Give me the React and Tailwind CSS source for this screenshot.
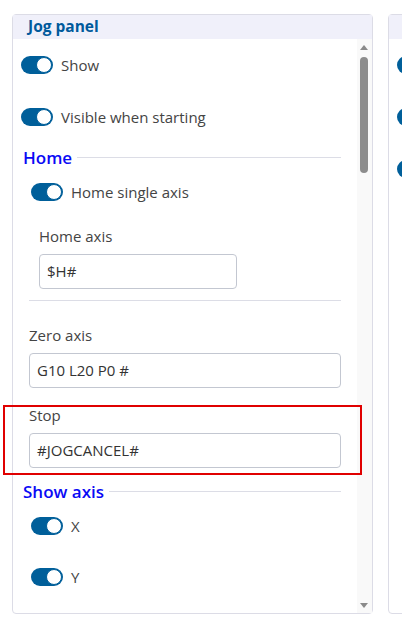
import React from "react";

function Toggle() {
  return (
    <div className="flex h-[18px] w-8 shrink-0 items-center justify-end rounded-full bg-[#005f9a] pr-[1px]">
      <div className="h-4 w-4 rounded-full border border-[#005f9a] bg-white" />
    </div>
  );
}

function ToggleRow({ label, className }) {
  return (
    <div className={"flex h-[18px] items-center gap-2 " + className}>
      <Toggle />
      <span className="text-[15px] leading-none text-[#444]">{label}</span>
    </div>
  );
}

function Legend({ text, className }) {
  return (
    <div className={"flex h-[22px] items-center gap-[5px] " + className}>
      <span className="text-[17px] font-semibold leading-none text-[#0a0af5]">{text}</span>
      <div className="h-px flex-1 bg-[#dcdde6]" />
    </div>
  );
}

function Field({ label, value, className, inputClass }) {
  return (
    <div className={className}>
      <div className="flex h-5 items-center text-[15px] text-[#444]">{label}</div>
      <div
        className={
          "mt-2 flex h-[35px] items-center rounded-[4px] border border-[#c3c7d1] px-[7px] text-[15px] text-[#333] " +
          (inputClass || "")
        }
      >
        {value}
      </div>
    </div>
  );
}

export default function App() {
  return (
    <div
      className="relative flex h-[628px] w-[402px] gap-[15px] overflow-hidden bg-white pl-3 pt-[14px]"
      style={{ fontFamily: '"Open Sans", "Noto Sans", sans-serif' }}
    >
      <div className="flex h-[600px] w-[361px] shrink-0 flex-col rounded-[4px] border border-[#dcdce6]">
        <div className="flex h-[24px] items-center bg-[#f0f0fa] pl-[15px] text-[15.5px] font-bold text-[#005a9c]">
          Jog panel
        </div>
        <div className="flex min-h-0 flex-1">
          <div className="flex-1 overflow-hidden pl-2 pr-4">
            <ToggleRow label="Show" className="mt-[17px]" />
            <ToggleRow label="Visible when starting" className="mt-[34px]" />

            <div className="pl-[2px]">
              <Legend text="Home" className="mt-[20px]" />
              <div className="pl-[6px]">
                <ToggleRow label="Home single axis" className="mt-[15px] pl-[2px]" />
                <Field label="Home axis" value="$H#" className="mt-[25px] pl-[10px]" inputClass="w-[198px]" />
                <div className="mt-[11px] h-px bg-[#dcdde6]" />
                <Field label="Zero axis" value="G10 L20 P0 #" className="mt-[24px]" />
                <Field label="Stop" value="#JOGCANCEL#" className="mt-[17px]" />
              </div>
              <Legend text="Show axis" className="mt-[12px]" />
              <div className="pl-2">
                <ToggleRow label="X" className="mt-[15px]" />
                <ToggleRow label="Y" className="mt-[33px]" />
              </div>
            </div>
          </div>
          <div className="relative w-[15px] shrink-0 bg-[#f9f9f9]">
            <div className="absolute left-[3px] top-[6px] h-0 w-0 border-x-[4px] border-b-[5px] border-x-transparent border-b-[#8a8a8a]" />
            <div className="absolute left-[3px] top-[18px] h-[116px] w-2 rounded-full bg-[#8c8c8c]" />
            <div className="absolute bottom-[5px] left-[3px] h-0 w-0 border-x-[4px] border-t-[5px] border-x-transparent border-t-[#8a8a8a]" />
          </div>
        </div>
      </div>

      <div className="flex h-[600px] w-[120px] shrink-0 flex-col rounded-[4px] border border-[#dcdce6]">
        <div className="h-[24px] bg-[#f0f0fa]" />
        <div className="pl-2">
          <div className="mt-[17px]"><Toggle /></div>
          <div className="mt-[34px]"><Toggle /></div>
          <div className="mt-[34px]"><Toggle /></div>
        </div>
      </div>

      <div className="pointer-events-none absolute left-[3px] top-[405px] h-[70px] w-[359px] border-2 border-[#e00000]" />
    </div>
  );
}
